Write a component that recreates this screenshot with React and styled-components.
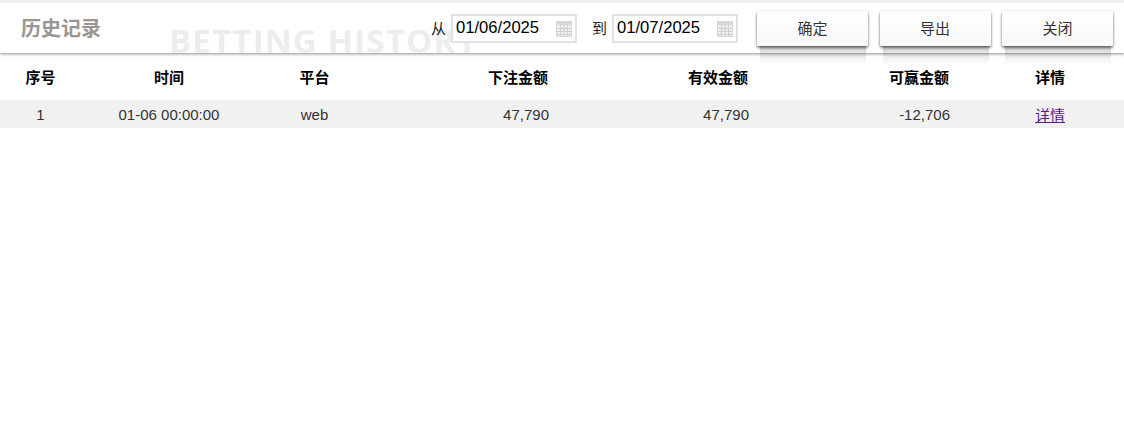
import React from 'react'
import styled, { createGlobalStyle } from 'styled-components'

const GlobalStyle = createGlobalStyle`
    body {
        margin: 0;
        background: #fff;
        font-family: "Liberation Sans", "Noto Sans CJK SC", sans-serif;
        color: #333;
    }
`

const columns = [81, 176, 115, 177, 200, 201, 174]

const CalendarIcon = () => (
    <svg width="16" height="16" viewBox="0 0 16 16">
        <rect width="16" height="16" fill="#d6d6d6" />
        <rect x="1" y="4" width="14" height="11" fill="#efefef" />
        <path d="M1 7.5h14M1 10.5h14M1 13.5h14M4.5 4v11M8 4v11M11.5 4v11" stroke="#d0d0d0" strokeWidth="1" />
    </svg>
)

const DateField = ({ value }) => (
    <DateBox>
        <DateInput readOnly defaultValue={value} />
        <CalendarIcon />
    </DateBox>
)

const App = () => {
    return (
        <>
            <GlobalStyle />
            <Header>
                <Watermark>BETTING HISTORY</Watermark>
                <Title>历史记录</Title>
                <Filters>
                    <Label>从</Label>
                    <DateField value="01/06/2025" />
                    <Label $left={10}>到</Label>
                    <DateField value="01/07/2025" />
                </Filters>
                <Buttons>
                    <Button>确定</Button>
                    <Button>导出</Button>
                    <Button>关闭</Button>
                </Buttons>
            </Header>
            <Table>
                <colgroup>
                    {columns.map((w, i) => <col key={i} width={w} />)}
                </colgroup>
                <thead>
                    <tr>
                        <Th>序号</Th>
                        <Th>时间</Th>
                        <Th>平台</Th>
                        <Th $right>下注金额</Th>
                        <Th $right>有效金额</Th>
                        <Th $right>可赢金额</Th>
                        <Th $detail>详情</Th>
                    </tr>
                </thead>
                <tbody>
                    <Row>
                        <Td>1</Td>
                        <Td>01-06 00:00:00</Td>
                        <Td>web</Td>
                        <Td $right>47,790</Td>
                        <Td $right>47,790</Td>
                        <Td $right>-12,706</Td>
                        <Td $detail><DetailLink href="#">详情</DetailLink></Td>
                    </Row>
                </tbody>
            </Table>
        </>
    )
}

const Header = styled.div`
    position: relative;
    display: flex;
    align-items: flex-start;
    height: 50px;
    border-top: 3px solid #f0f0f0;
    background: #fff;
    box-shadow: 0 1px 3px rgba(0, 0, 0, 0.45);
`
const Watermark = styled.div`
    position: absolute;
    left: 169px;
    top: 17px;
    height: 33px;
    overflow: hidden;
    font-family: "Open Sans", sans-serif;
    font-size: 33px;
    line-height: 42px;
    font-weight: 700;
    letter-spacing: 1.2px;
    white-space: nowrap;
    color: #ededed;
`
const Title = styled.h1`
    position: relative;
    width: 431px;
    margin: 0;
    padding: 12px 0 0 21px;
    box-sizing: border-box;
    font-size: 20px;
    line-height: 28px;
    font-weight: 700;
    color: #9b9691;
`
const Filters = styled.div`
    position: relative;
    display: flex;
    align-items: center;
    gap: 5px;
    margin-top: 11px;
`
const Label = styled.span`
    margin-left: ${props => props.$left || 0}px;
    padding-bottom: 3px;
    font-size: 15px;
    color: #222;
`
const DateBox = styled.div`
    display: flex;
    align-items: center;
    justify-content: space-between;
    width: 126px;
    height: 29px;
    box-sizing: border-box;
    padding: 0 3px 0 3px;
    border: 2px solid #e2e2e2;
    background: #fff;
`
const DateInput = styled.input`
    width: 92px;
    margin-top: -2px;
    padding: 0;
    border: none;
    outline: none;
    background: transparent;
    font-family: "Liberation Sans", sans-serif;
    font-size: 16.6px;
    color: #000;
`
const Buttons = styled.div`
    position: relative;
    display: flex;
    gap: 11.5px;
    margin: 8px 0 0 19px;
`
const Button = styled.button`
    position: relative;
    width: 111px;
    height: 35px;
    padding: 0 0 2px;
    border: none;
    border-radius: 2px;
    background: linear-gradient(#ffffff, #f8f8f8);
    box-shadow: 0 2px 3px rgba(0, 0, 0, 0.55), 0 0 2px rgba(0, 0, 0, 0.2);
    font-family: "Liberation Sans", "Noto Sans CJK SC", sans-serif;
    font-size: 15px;
    color: #333;

    &::after {
        content: "";
        position: absolute;
        left: 3px;
        right: 2px;
        top: 35px;
        height: 19px;
        background: linear-gradient(rgba(0, 0, 0, 0.16), rgba(0, 0, 0, 0));
        pointer-events: none;
    }
`
const Table = styled.table`
    width: 1124px;
    table-layout: fixed;
    border-collapse: collapse;
`
const Th = styled.th`
    height: 47px;
    padding: 0 ${props => props.$right ? '1px' : '0'} 0 ${props => props.$detail ? '26px' : '0'};
    text-align: ${props => props.$right ? 'right' : 'center'};
    font-size: 15px;
    font-weight: 700;
    color: #000;
`
const Row = styled.tr`
    background: #f1f1f1;
`
const Td = styled.td`
    height: 28px;
    padding: 0 0 0 ${props => props.$detail ? '26px' : '0'};
    text-align: ${props => props.$right ? 'right' : 'center'};
    font-size: 15px;
    color: #333;
`
const DetailLink = styled.a`
    color: #551a8b;
    text-decoration: underline;
`

export default App
